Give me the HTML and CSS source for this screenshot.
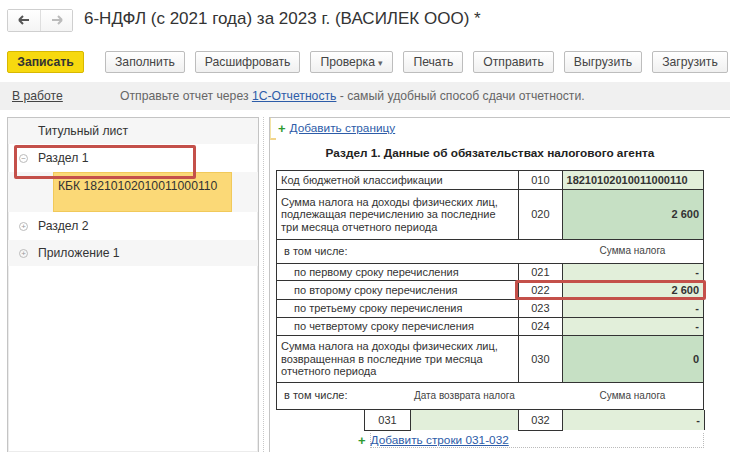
FILE: index.html
```html
<!DOCTYPE html>
<html lang="ru">
<head>
    <meta charset="UTF-8">
    <title>6-НДФЛ (с 2021 года) за 2023 г.</title>
    <link rel="stylesheet" href="styles.css">
</head>
<body>
    <div class="header">
        <div class="nav">
            <span class="nav-btn">
                <svg width="12" height="10" viewBox="0 0 12 10"><path d="M1 5h10M1 5l4-4M1 5l4 4" stroke="#555" stroke-width="2" fill="none"/></svg>
            </span>
            <span class="nav-btn">
                <svg width="12" height="10" viewBox="0 0 12 10"><path d="M11 5H1M11 5L7 1M11 5L7 9" stroke="#bbb" stroke-width="2" fill="none"/></svg>
            </span>
        </div>
        <h1>6-НДФЛ (с 2021 года) за 2023 г. (ВАСИЛЕК ООО) *</h1>
    </div>

    <div class="toolbar">
        <button class="btn btn-main">Записать</button>
        <div class="btn-group">
            <button class="btn">Заполнить</button>
            <button class="btn">Расшифровать</button>
            <button class="btn">Проверка <span class="caret">▾</span></button>
            <button class="btn">Печать</button>
            <button class="btn">Отправить</button>
            <button class="btn">Выгрузить</button>
            <button class="btn">Загрузить</button>
        </div>
    </div>

    <div class="infobar">
        <a class="status">В работе</a>
        <span class="hint">Отправьте отчет через <a class="link">1С-Отчетность</a> - самый удобный способ сдачи отчетности.</span>
    </div>

    <div class="main">
        <div class="tree">
            <div class="tree-row gray r26">Титульный лист</div>
            <div class="tree-row r28"><span class="toggle">−</span>Раздел 1</div>
            <div class="tree-row gray sub"><span class="kbk">КБК 18210102010011000110</span></div>
            <div class="tree-row r28"><span class="toggle">+</span>Раздел 2</div>
            <div class="tree-row gray r26"><span class="toggle">+</span>Приложение 1</div>
            <div class="tree-row r26"></div>
            <div class="mark mark-tree"></div>
        </div>

        <div class="splitter"></div>

        <div class="sheet">
            <div class="add-page">
                <span class="cursor"></span>
                <span class="plus">+</span><a class="link">Добавить страницу</a>
            </div>
            <div class="sheet-title">Раздел 1. Данные об обязательствах налогового агента</div>

            <div class="table-wrap">
                <table class="form">
                    <colgroup><col class="c-label"><col class="c-code"><col class="c-val"></colgroup>
                    <tr class="h19">
                        <td>Код бюджетной классификации</td>
                        <td class="code">010</td>
                        <td class="val light left bold">18210102010011000110</td>
                    </tr>
                    <tr class="h50">
                        <td>Сумма налога на доходы физических лиц, подлежащая перечислению за последние три месяца отчетного периода</td>
                        <td class="code">020</td>
                        <td class="val dark bold">2 600</td>
                    </tr>
                    <tr class="h24 plain">
                        <td colspan="2" class="pad">в том числе:</td>
                        <td class="center">Сумма налога</td>
                    </tr>
                    <tr class="h17">
                        <td class="indent">по первому сроку перечисления</td>
                        <td class="code">021</td>
                        <td class="val light bold">-</td>
                    </tr>
                    <tr class="h19">
                        <td class="indent">по второму сроку перечисления</td>
                        <td class="code">022</td>
                        <td class="val light bold">2 600</td>
                    </tr>
                    <tr class="h18">
                        <td class="indent">по третьему сроку перечисления</td>
                        <td class="code">023</td>
                        <td class="val light bold">-</td>
                    </tr>
                    <tr class="h18">
                        <td class="indent">по четвертому сроку перечисления</td>
                        <td class="code">024</td>
                        <td class="val light bold">-</td>
                    </tr>
                    <tr class="h47">
                        <td>Сумма налога на доходы физических лиц, возвращенная в последние три месяца отчетного периода</td>
                        <td class="code">030</td>
                        <td class="val dark bold">0</td>
                    </tr>
                    <tr class="h27 plain">
                        <td class="pad nowrap"><span class="lbl">в том числе:</span><span class="date-head">Дата возврата налога</span></td>
                        <td></td>
                        <td class="center">Сумма налога</td>
                    </tr>
                </table>
                <div class="mark mark-row"></div>
            </div>

            <table class="form sub-table">
                <colgroup><col class="c-n"><col class="c-date"><col class="c-code"><col class="c-val"></colgroup>
                <tr class="h20">
                    <td class="code">031</td>
                    <td class="val light"></td>
                    <td class="code">032</td>
                    <td class="val light bold">-</td>
                </tr>
            </table>
            <div class="add-rows">
                <span class="plus">+</span><a class="link">Добавить строки 031-032</a>
            </div>
        </div>
    </div>
</body>
</html>
```

FILE: styles.css
```css
* {
    margin: 0;
    padding: 0;
    box-sizing: border-box;
}

body {
    width: 730px;
    height: 452px;
    overflow: hidden;
    font-family: "Liberation Sans", Arial, sans-serif;
    color: #333;
    background: #fff;
}

/* Заголовок */
.header {
    display: flex;
    align-items: center;
    height: 40px;
    padding-left: 7px;
}

.nav {
    display: flex;
    border: 1px solid #cfcfcf;
    border-radius: 2px;
    height: 23px;
}

.nav-btn {
    width: 32px;
    display: flex;
    align-items: center;
    justify-content: center;
    background: linear-gradient(#fff, #f4f4f4);
}

.nav-btn + .nav-btn {
    border-left: 1px solid #dedede;
}

h1 {
    font-size: 17px;
    font-weight: normal;
    color: #333;
    margin-left: 11px;
    padding-bottom: 2px;
}

/* Панель кнопок */
.toolbar {
    display: flex;
    margin-top: 11px;
    padding-left: 7px;
    height: 22px;
}

.btn-group {
    display: flex;
    gap: 10px;
    margin-left: 21px;
}

.btn {
    font-family: inherit;
    font-size: 12.2px;
    color: #444;
    height: 22px;
    padding: 0 9px;
    white-space: nowrap;
    border: 1px solid #bdbdbd;
    border-radius: 2px;
    background: linear-gradient(#fff, #f0f0f0);
}

.btn-main {
    width: 77px;
    font-weight: bold;
    color: #333;
    background: #f7d90f;
    border-color: #d8b800;
}

.caret {
    font-size: 9px;
    color: #666;
}

/* Информационная строка */
.infobar {
    display: flex;
    align-items: center;
    margin-top: 9px;
    height: 28px;
    background: #f0f0f0;
    font-size: 12.2px;
    padding-left: 12px;
}

.status {
    color: #444;
    text-decoration: underline;
    width: 108px;
}

.hint {
    color: #666;
}

.link {
    color: #2d5ca8;
    text-decoration: underline;
}

/* Основная часть */
.main {
    display: flex;
    margin-top: 7px;
    height: 335px;
}

.tree {
    position: relative;
    width: 252px;
    margin-left: 7px;
    border: 1px solid #c4c4c4;
    border-bottom: none;
    box-shadow: inset 0 0 0 1px #ececec;
    font-size: 12.2px;
    color: #333;
}

.tree-row {
    display: flex;
    align-items: center;
    padding-left: 30px;
    position: relative;
}

.r26 { height: 26px; }
.r28 { height: 28px; }

.tree-row.gray {
    background: #f6f6f6;
}

.tree-row.sub {
    height: 40px;
    padding-left: 45px;
    align-items: stretch;
}

.toggle {
    position: absolute;
    left: 11px;
    width: 9px;
    height: 9px;
    border: 1px solid #bbb;
    border-radius: 50%;
    font-size: 8px;
    line-height: 7px;
    text-align: center;
    color: #999;
}

.kbk {
    width: 179px;
    background: #fbd977;
    border: 1px solid #f1c95a;
    padding: 6px 0 0 4px;
    color: #333;
}

.mark {
    position: absolute;
    border: 3px solid #c4504a;
    border-radius: 2px;
}

.mark-tree {
    left: 6px;
    top: 27px;
    width: 182px;
    height: 34px;
}

.splitter {
    width: 5px;
    border-right: 1px dotted #c8c8c8;
    margin-right: 5px;
}

.sheet {
    flex: 1;
    border-left: 1px solid #c4c4c4;
    border-top: 1px solid #c4c4c4;
    padding-left: 6px;
}

.add-page {
    display: flex;
    align-items: center;
    height: 20px;
    font-size: 11.8px;
    position: relative;
}

.cursor {
    position: absolute;
    left: -6px;
    top: 0;
    width: 6px;
    height: 22px;
    border-left: 1px solid #f3e3a6;
    border-bottom: 2px solid #f2d48a;
}

.plus {
    color: #2e9a2e;
    font-weight: bold;
    font-size: 13px;
    margin: 0 4px 0 2px;
}

.sheet-title {
    width: 428px;
    text-align: center;
    font-weight: bold;
    font-size: 11.8px;
    color: #222;
    margin-top: 8px;
    margin-bottom: 10px;
}

/* Таблица формы */
.table-wrap {
    position: relative;
    width: 428px;
}

.form {
    border-collapse: collapse;
    table-layout: fixed;
    font-size: 11px;
    color: #333;
}

.form td {
    border: 1px solid #333;
    padding: 0 4px;
    line-height: 12.5px;
}

.c-label { width: 242px; }
.c-code { width: 44px; }
.c-val { width: 142px; }
.c-n { width: 46px; }
.c-date { width: 108px; }

.h17 { height: 17px; }
.h18 { height: 18px; }
.h19 { height: 19px; }
.h20 { height: 20px; }
.h24 { height: 24px; }
.h27 { height: 27px; }
.h47 { height: 47px; }
.h50 { height: 50px; }

.form .code {
    text-align: center;
}

.form .val {
    text-align: right;
}

.form .val.left {
    text-align: left;
}

.light { background: #e2efda; }
.dark { background: #c6e0c4; }
.bold { font-weight: bold; }

.form .indent {
    padding-left: 17px;
}

.plain td {
    border-left: none;
    border-right: none;
}

.plain td:first-child {
    border-left: 1px solid #333;
}

.plain td:last-child {
    border-right: 1px solid #333;
}

.form .pad {
    padding-left: 7px;
}

.form .nowrap {
    white-space: nowrap;
    overflow: visible;
}

.form .center {
    text-align: center;
    color: #444;
    font-size: 10px;
}

.lbl {
    display: inline-block;
    width: 130px;
}

.date-head {
    font-size: 10px;
    color: #444;
}

.mark-row {
    left: 239px;
    top: 110px;
    width: 191px;
    height: 20px;
}

.sub-table {
    margin-left: 88px;
}

.sub-table td {
    border-top: none;
}

.sub-table .val {
    border-bottom: none;
}

.add-rows {
    display: flex;
    align-items: center;
    height: 20px;
    font-size: 11.8px;
    margin-left: 80px;
    width: 348px;
}

.add-rows .link {
    border: 1px dotted #bbb;
    border-top: none;
    flex: 1;
    padding-left: 0;
}
```
